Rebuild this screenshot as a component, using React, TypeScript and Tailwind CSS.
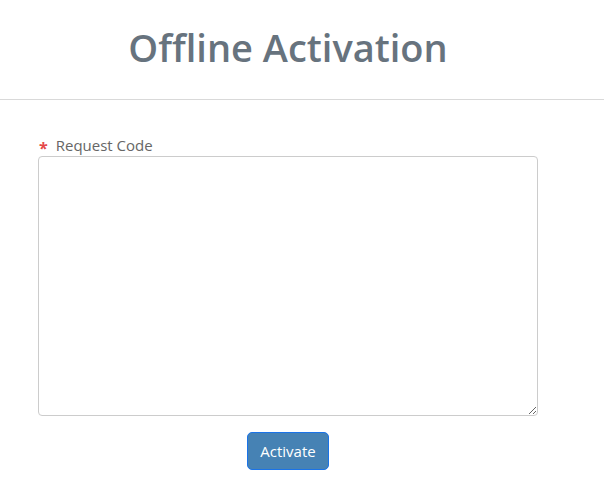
export default function App() {
  return (
    <div className="min-h-[493px] w-[604px] bg-white font-['Open_Sans',sans-serif]">
      <header className="border-b border-[#d9d9d9] pr-[28px] pt-[17px] pb-[21px] text-center">
        <h1 className="text-[38px] leading-[61px] font-semibold text-[#67737e]">Offline Activation</h1>
      </header>
      <form className="w-[538px] pl-[38px] pt-[35px]">
        <label className="flex items-center text-[15px] leading-[20px] text-[#666]">
          <span className="ml-[1px] mr-[8px] mt-[5px] text-[16px] font-bold leading-[10px] text-[#e54848]">*</span>
          Request Code
        </label>
        <textarea className="mt-[1px] block h-[260px] w-[500px] resize-y rounded-[4px] border border-[#cccccc] p-2 text-sm outline-none" />
        <div className="flex justify-center pt-[16px]">
          <button
            type="button"
            className="h-[38px] w-[82px] rounded-[5px] border border-[#1a73e8] bg-[#4682b4] text-[15px] text-white"
          >
            Activate
          </button>
        </div>
      </form>
    </div>
  );
}
